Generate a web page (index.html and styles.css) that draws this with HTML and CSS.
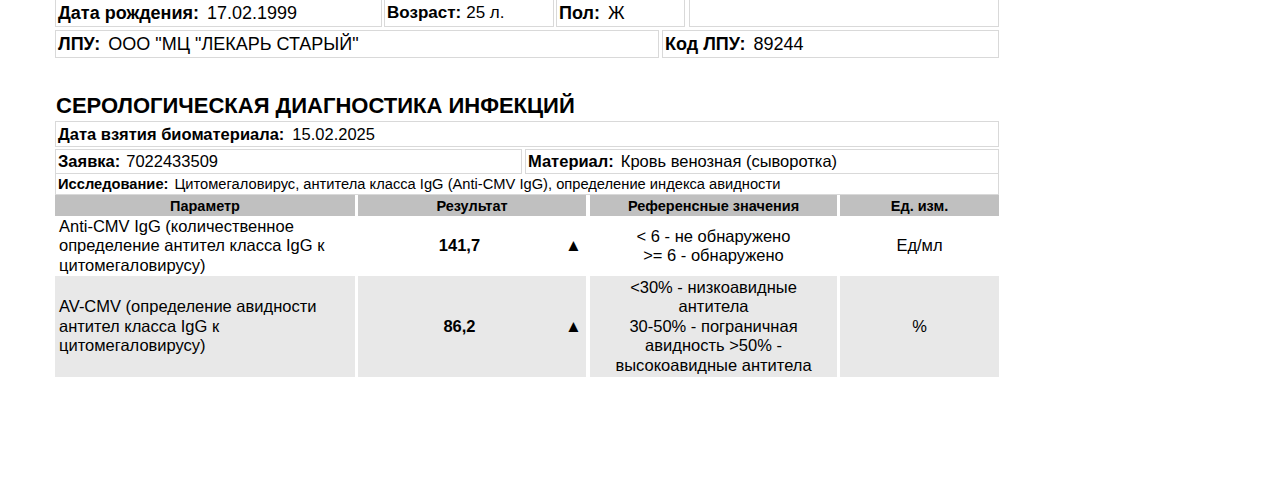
FILE: index.html
```html
<!DOCTYPE html>
<html lang="ru">
<head>
<meta charset="utf-8">
<title>Серологическая диагностика инфекций</title>
<link rel="stylesheet" href="styles.css">
</head>
<body>
<div class="page">
  <div class="info-row">
    <div class="cell big w-birth"><b>Дата рождения:</b> <span>17.02.1999</span></div>
    <div class="cell mid w-age g5"><b>Возраст:</b> <span>25 л.</span></div>
    <div class="cell big w-sex"><b>Пол:</b> <span>Ж</span></div>
    <div class="cell big w-empty"></div>
  </div>
  <div class="info-row gap3">
    <div class="cell big w-lpu"><b>ЛПУ:</b> <span>ООО "МЦ "ЛЕКАРЬ СТАРЫЙ"</span></div>
    <div class="cell big w-code"><b>Код ЛПУ:</b> <span>89244</span></div>
  </div>

  <h1 class="title">СЕРОЛОГИЧЕСКАЯ ДИАГНОСТИКА ИНФЕКЦИЙ</h1>

  <div class="info-row">
    <div class="cell w-full"><b>Дата взятия биоматериала:</b> <span>15.02.2025</span></div>
  </div>
  <div class="info-row gap3 mt2">
    <div class="cell w-order g6"><b>Заявка:</b> <span>7022433509</span></div>
    <div class="cell w-mat g7"><b>Материал:</b> <span>Кровь венозная (сыворотка)</span></div>
  </div>
  <div class="info-row">
    <div class="cell w-full study g6"><b>Исследование:</b> <span>Цитомегаловирус, антитела класса IgG (Anti-CMV IgG), определение индекса авидности</span></div>
  </div>

  <div class="results">
    <div class="th c1">Параметр</div>
    <div class="th c2 span2">Результат</div>
    <div class="th c4">Референсные значения</div>
    <div class="th c5">Ед. изм.</div>

    <div class="td c1 param">Anti-CMV IgG (количественное определение антител класса IgG к цитомегаловирусу)</div>
    <div class="td c2 val">141,7</div>
    <div class="td c3 flag">▲</div>
    <div class="td c4 ref">&lt; 6 - не обнаружено<br>&gt;= 6 - обнаружено</div>
    <div class="td c5 unit">Ед/мл</div>

    <div class="td c1 param alt">AV-CMV (определение авидности антител класса IgG к цитомегаловирусу)</div>
    <div class="td c2 val alt">86,2</div>
    <div class="td c3 flag alt">▲</div>
    <div class="td c4 ref alt">&lt;30% - низкоавидные антитела<br>30-50% - пограничная авидность &gt;50% - высокоавидные антитела</div>
    <div class="td c5 unit alt">%</div>
  </div>
</div>
</body>
</html>
```

FILE: styles.css
```css
html, body {
  margin: 0;
  padding: 0;
  background: #fff;
}

body {
  font-family: "Liberation Sans", Arial, sans-serif;
  color: #000;
  font-size: 16px;
}

.page {
  margin-left: 55px;
  margin-top: -1px;
  width: 944px;
}

.info-row {
  display: flex;
  gap: 2px;
}

.info-row.gap3 {
  gap: 3px;
  margin-top: 3px;
}

.info-row.mt2 {
  margin-top: 2px;
}

.cell {
  box-sizing: border-box;
  height: 28px;
  border: 1px solid #d9d9d9;
  display: flex;
  align-items: center;
  gap: 8px;
  padding: 0 2px;
  white-space: nowrap;
  font-size: 16.5px;
}

.cell.big { font-size: 18px; }
.cell.mid { font-size: 17px; }
.cell.g5 { gap: 5px; }
.cell.g6 { gap: 6px; }
.cell.g7 { gap: 7px; }

.cell b {
  font-weight: 700;
}

.w-birth { width: 327px; }
.w-age { width: 170px; }
.w-sex { width: 129px; }
.w-empty { width: 310px; margin-left: 2px; }
.w-lpu { width: 604px; }
.w-code { width: 337px; }
.w-full { width: 944px; height: 26px; }
.w-order { width: 467px; height: 25px; }
.w-mat { width: 474px; height: 25px; }

.study {
  font-size: 14.7px;
  height: 21px;
  border-top: none;
}

.title {
  margin: 33px 0 0 1px;
  height: 30px;
  font-size: 22px;
  font-weight: 700;
  line-height: 30px;
}

.results {
  display: grid;
  grid-template-columns: 300px 206px 25px 251px 162px;
  grid-template-rows: 21px 60px 101px;
}

.th {
  background: #c0c0c0;
  font-size: 14.5px;
  font-weight: 700;
  display: flex;
  align-items: center;
  justify-content: center;
  box-sizing: border-box;
}

.span2 {
  grid-column: span 2;
}

.td {
  box-sizing: border-box;
  display: flex;
  align-items: center;
  font-size: 16.5px;
  line-height: 19.5px;
  background: #fff;
}

.c2 { border-left: 3px solid #fff; }
.c4 { border-left: 4px solid #fff; }
.c5 { border-left: 3px solid #fff; }

.td.alt {
  background: #e8e8e8;
}

.param {
  padding: 0 4px;
}

.val {
  justify-content: center;
  font-weight: 700;
}

.flag {
  justify-content: center;
  font-size: 17px;
}

.ref {
  justify-content: center;
  text-align: center;
  padding: 0 16px;
}

.unit {
  justify-content: center;
}
```
